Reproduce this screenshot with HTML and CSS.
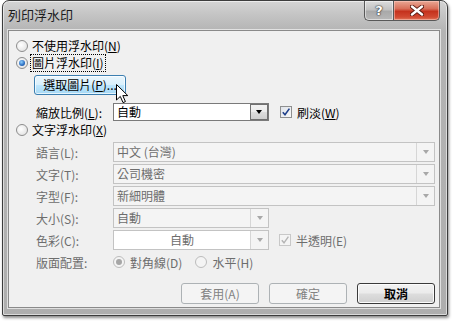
FILE: index.html
```html
<!DOCTYPE html>
<html>
<head>
<meta charset="utf-8">
<title>列印浮水印</title>
<link rel="stylesheet" href="styles.css">
</head>
<body>
<div class="window">
  <div class="titlebar">
    <span class="title">列印浮水印</span>
    <div class="caption">
      <div class="cap help"><span>?</span></div>
      <div class="cap close">
        <svg width="14" height="11" viewBox="0 0 14 11"><path d="M2 1.5 L12 9.5 M12 1.5 L2 9.5" stroke="#5a1a10" stroke-width="4.2" stroke-linecap="round"/><path d="M2 1.5 L12 9.5 M12 1.5 L2 9.5" stroke="#ffffff" stroke-width="2.4" stroke-linecap="round"/></svg>
      </div>
    </div>
  </div>
  <div class="client">
    <div class="radio-row r1"><span class="radio"></span><span>不使用浮水印(<u>N</u>)</span></div>
    <div class="radio-row r2"><span class="radio on"></span><span class="focus">圖片浮水印(<u>I</u>)</span></div>
    <div class="pick-row">
      <div class="btn hover">選取圖片(<u>P</u>)...</div>
      <svg class="cursor" width="13" height="20" viewBox="0 0 13 20"><path d="M0.5 0.5 L0.5 16 L4.3 12.4 L7 18.6 L9.4 17.6 L6.8 11.6 L11.8 11.6 Z" fill="#fff" stroke="#000" stroke-width="1" stroke-linejoin="miter"/></svg>
    </div>
    <div class="field-row scale">
      <span class="label en">縮放比例(<u>L</u>):</span>
      <div class="combo small enabled"><span class="val">自動</span><span class="drop"><i></i></span></div>
      <span class="check on"><svg width="10" height="10" viewBox="0 0 10 10"><path d="M1.8 5.2 L4 7.8 L8.4 1.6" fill="none" stroke="#1e3f8a" stroke-width="1.6"/></svg></span>
      <span class="check-text">刷淡(<u>W</u>)</span>
    </div>
    <div class="radio-row r3"><span class="radio"></span><span>文字浮水印(<u>X</u>)</span></div>
    <div class="fields">
      <div class="field-row">
        <span class="label">語言(L):</span>
        <div class="combo wide"><span class="val">中文 (台灣)</span><span class="drop"><i></i></span></div>
      </div>
      <div class="field-row">
        <span class="label">文字(T):</span>
        <div class="combo wide"><span class="val">公司機密</span><span class="drop"><i></i></span></div>
      </div>
      <div class="field-row">
        <span class="label">字型(F):</span>
        <div class="combo wide"><span class="val">新細明體</span><span class="drop"><i></i></span></div>
      </div>
      <div class="field-row">
        <span class="label">大小(S):</span>
        <div class="combo small"><span class="val">自動</span><span class="drop"><i></i></span></div>
      </div>
      <div class="field-row">
        <span class="label">色彩(C):</span>
        <div class="combo small white"><span class="val center">自動</span><span class="drop"><i></i></span></div>
        <span class="check dis"><svg width="10" height="10" viewBox="0 0 10 10"><path d="M1.8 5.2 L4 7.8 L8.4 1.6" fill="none" stroke="#b4b4b4" stroke-width="1.4"/></svg></span>
        <span class="check-text dis-text">半透明(E)</span>
      </div>
      <div class="field-row layout">
        <span class="label">版面配置:</span>
        <span class="radio dis on-dis"></span><span class="dis-text opt">對角線(D)</span>
        <span class="radio dis second"></span><span class="dis-text opt">水平(H)</span>
      </div>
    </div>
    <div class="actions">
      <div class="btn dlg disabled">套用(A)</div>
      <div class="btn dlg disabled">確定</div>
      <div class="btn dlg default">取消</div>
    </div>
  </div>
</div>
</body>
</html>
```
FILE: styles.css
```css
html, body {
  margin: 0;
  padding: 0;
  background: #ffffff;
}
body {
  font-family: "Noto Sans CJK TC", "Liberation Sans", sans-serif;
  font-size: 12px;
  color: #000;
  width: 454px;
  height: 323px;
  overflow: hidden;
}
.window {
  box-sizing: border-box;
  width: 446px;
  height: 316px;
  margin-left: 2px;
  border: 1px solid #3c3c3c;
  border-radius: 7px 7px 2px 2px;
  background: linear-gradient(#d4d4d4 0px, #c4c4c4 14px, #b4b4b4 30px, #aeaeae 100%);
  box-shadow: 1px 2px 3px rgba(0,0,0,0.45), inset 0 0 0 1px rgba(255,255,255,0.55);
  display: flex;
  flex-direction: column;
}
.titlebar {
  height: 29px;
  display: flex;
  align-items: flex-start;
  justify-content: space-between;
}
.title {
  font-size: 13px;
  line-height: 13px;
  margin-top: 7px;
  margin-left: 5px;
  color: #1c1c1c;
  letter-spacing: 0;
}
.caption {
  display: flex;
  margin-right: 7px;
}
.cap {
  box-sizing: border-box;
  height: 20px;
  display: flex;
  align-items: center;
  justify-content: center;
  border: 1px solid #585858;
  border-top: none;
}
.help {
  width: 29px;
  border-radius: 0 0 0 5px;
  border-right: none;
  background: linear-gradient(#dcdcdc, #c2c2c2 45%, #a9a9a9 55%, #b8b8b8);
  box-shadow: inset 0 0 0 1px rgba(255,255,255,0.5);
}
.help span {
  font-family: "DejaVu Sans", sans-serif;
  font-weight: bold;
  font-size: 13px;
  color: #fff;
  text-shadow: 0 0 1px #333, 0 0 1px #333, 0 0 2px #444;
  line-height: 1;
}
.close {
  width: 47px;
  border-radius: 0 0 5px 0;
  background: linear-gradient(#e9a794, #d8705a 40%, #c5321d 55%, #d24a32 85%, #e07a5e);
  box-shadow: inset 0 0 0 1px rgba(255,210,200,0.5);
}
.client {
  box-sizing: border-box;
  width: 432px;
  height: 278px;
  margin-left: 5px;
  background: #f0f0f0;
  border: 1px solid #8a8a8a;
  box-shadow: 0 0 0 1px rgba(255,255,255,0.6);
  padding: 7px 4px 0 7px;
  display: flex;
  flex-direction: column;
}
u { text-decoration: underline; text-underline-offset: 1px; }
.radio-row {
  height: 16px;
  display: flex;
  align-items: center;
  line-height: 16px;
}
.r2 { margin-top: 1px; }
.r3 { margin-top: 1px; }
.radio {
  box-sizing: border-box;
  width: 12px;
  height: 12px;
  border-radius: 50%;
  border: 1px solid #8d8d8d;
  background: radial-gradient(circle at 40% 40%, #ffffff, #dcdcdc);
  margin-right: 4px;
  flex: none;
  position: relative;
}
.radio.on::after {
  content: "";
  position: absolute;
  left: 2px; top: 2px;
  width: 6px; height: 6px;
  border-radius: 50%;
  background: radial-gradient(circle at 40% 35%, #8fd0ff, #2a6cc0 60%, #174b8c);
}
.focus {
  outline: 1px dotted #000;
  outline-offset: 0;
  padding: 0 1px;
  margin-left: -1px;
}
.pick-row {
  margin-top: 4px;
  height: 20px;
  position: relative;
  display: flex;
}
.btn {
  box-sizing: border-box;
  height: 20px;
  display: flex;
  align-items: center;
  justify-content: center;
  border-radius: 3px;
  line-height: 1;
}
.btn.hover {
  width: 92px;
  margin-left: 18px;
  border: 1px solid #3c7fb1;
  background: linear-gradient(#eaf6fd, #d9f0fc 48%, #bee6fd 52%, #a7d9f5);
  box-shadow: inset 0 0 0 1px rgba(255,255,255,0.7);
}
.cursor {
  position: absolute;
  left: 100px;
  top: 9px;
}
.field-row {
  display: flex;
  align-items: center;
  height: 20px;
}
.scale {
  margin-top: 8px;
  height: 18px;
}
.label {
  width: 77px;
  margin-left: 20px;
  flex: none;
  color: #6d6d6d;
  white-space: nowrap;
}
.label.en { color: #000; }
.combo {
  box-sizing: border-box;
  height: 20px;
  border: 1px solid #c3c3c3;
  background: #f4f4f4;
  display: flex;
  align-items: stretch;
  flex: none;
  color: #6d6d6d;
}
.scale .combo { height: 18px; }
.combo.wide { width: 322px; }
.combo.small { width: 156px; }
.combo.white { background: #ffffff; }
.combo.enabled {
  background: #fff;
  border-color: #7a7a7a;
  color: #000;
}
.val {
  flex: 1;
  padding-left: 3px;
  display: flex;
  align-items: center;
  line-height: 1;
  white-space: nowrap;
}
.val.center { justify-content: center; padding-left: 0; }
.drop {
  box-sizing: border-box;
  width: 18px;
  border-left: 1px solid #d6d6d6;
  display: flex;
  align-items: center;
  justify-content: center;
  background: #f4f4f4;
}
.drop i {
  width: 0; height: 0;
  border-left: 3.5px solid transparent;
  border-right: 3.5px solid transparent;
  border-top: 4px solid #a8a8a8;
}
.enabled .drop {
  border: 1px solid #707070;
  margin: 0;
  background: linear-gradient(#f2f2f2, #ebebeb 48%, #dddddd 52%, #cfcfcf);
}
.enabled .drop i { border-top-color: #000; }
.check {
  box-sizing: border-box;
  width: 12px;
  height: 12px;
  border: 1px solid #8e8f8f;
  background: linear-gradient(135deg, #dfe3ea, #f8f8f8);
  margin-left: 11px;
  margin-right: 5px;
  display: flex;
  align-items: center;
  justify-content: center;
  flex: none;
}
.check.dis {
  border-color: #c8c8c8;
  background: #f4f4f4;
  margin-left: 10px;
}
.check-text { white-space: nowrap; }
.dis-text { color: #6d6d6d; white-space: nowrap; }
.r3 + .fields { margin-top: 4px; }
.fields {
  display: flex;
  flex-direction: column;
  gap: 2px;
}
.radio.dis {
  border-color: #bcbcbc;
  background: #f4f4f4;
}
.radio.on-dis::after {
  content: "";
  position: absolute;
  left: 2px; top: 2px;
  width: 6px; height: 6px;
  border-radius: 50%;
  background: #a6a6a6;
}
.layout .opt { margin-left: 1px; }
.radio.second { margin-left: 13px; }
.actions {
  margin-top: 11px;
  display: flex;
  justify-content: flex-end;
  gap: 10px;
}
.btn.dlg {
  width: 78px;
  height: 21px;
}
.btn.disabled {
  border: 1px solid #adb2b5;
  background: #f4f4f4;
  color: #838383;
}
.btn.default {
  border: 1px solid #3a3a3a;
  background: linear-gradient(#f2f2f2, #ebebeb 48%, #dddddd 52%, #cfcfcf);
  box-shadow: inset 0 0 0 1px #fcfcfc;
  color: #000;
  font-weight: bold;
}
```
